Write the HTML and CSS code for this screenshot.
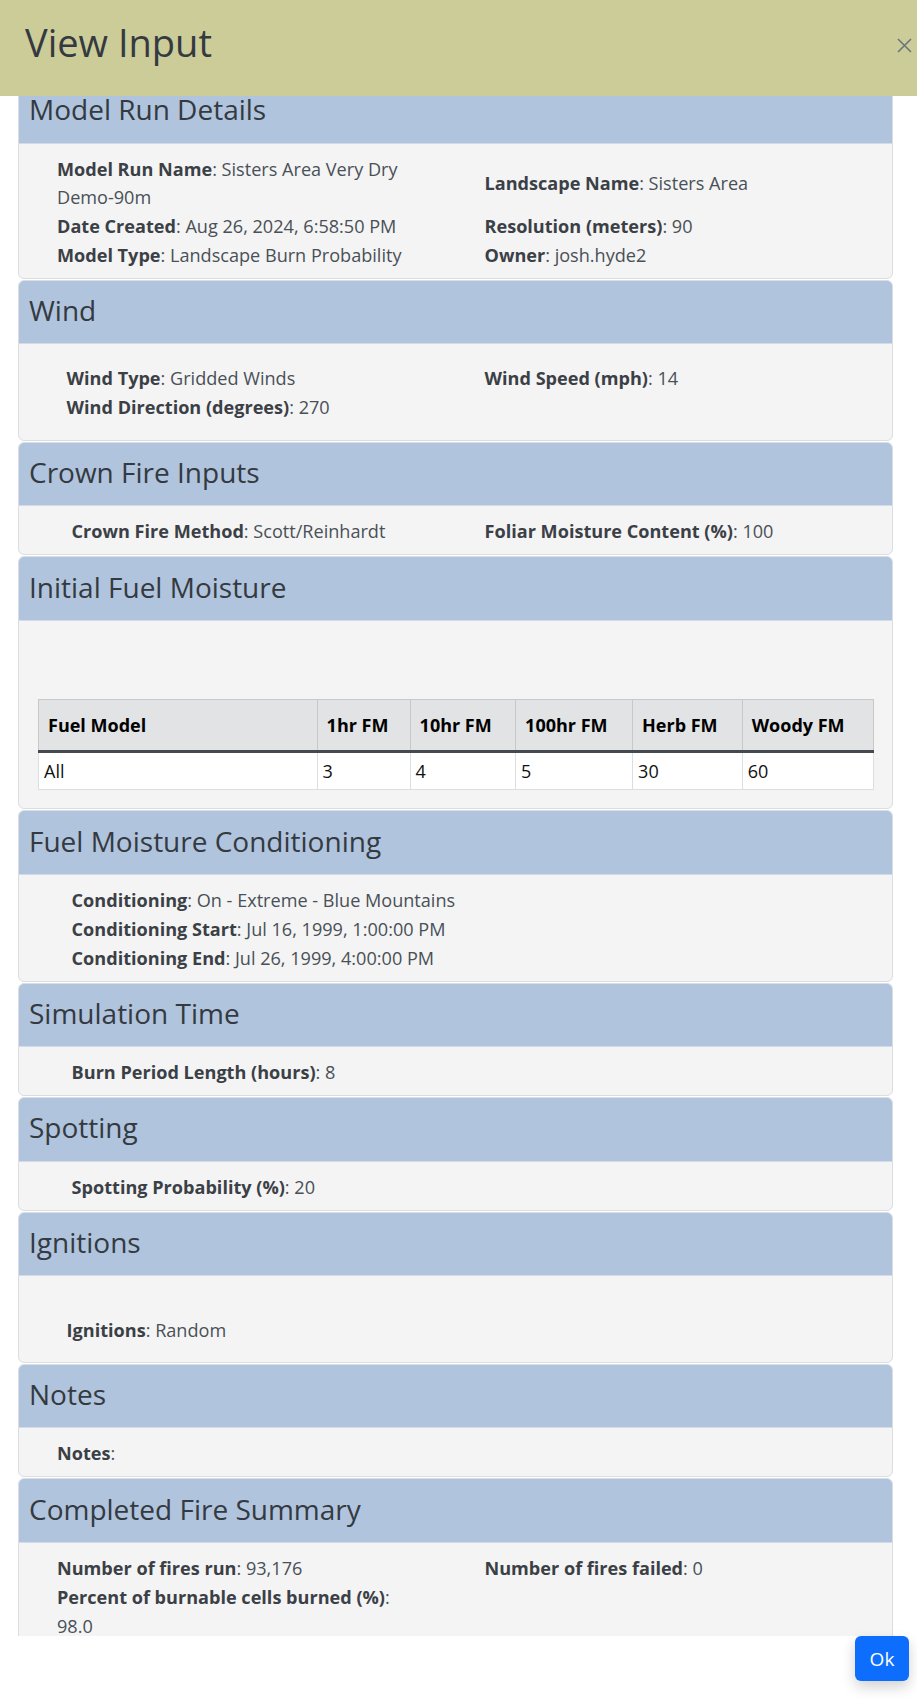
FILE: index.html
```html
<!DOCTYPE html>
<html lang="en">
<head>
<meta charset="utf-8">
<title>View Input</title>
<link rel="stylesheet" href="styles.css">
</head>
<body>
<div class="modal">
  <div class="modal-header">
    <h2 class="modal-title">View Input</h2>
    <button class="close" aria-label="Close">
      <svg width="15" height="15" viewBox="0 0 15 15"><path d="M1 1 L14 14 M14 1 L1 14" stroke="#6c757d" stroke-width="1.6" fill="none"/></svg>
    </button>
  </div>
  <div class="modal-body">
    <div class="cards">
      <section class="card">
        <div class="card-header"><h3>Model Run Details</h3></div>
        <div class="card-body grid pad-a">
          <div class="field"><b>Model Run Name</b>: Sisters Area Very Dry Demo-90m</div>
          <div class="field"><b>Landscape Name</b>: Sisters Area</div>
          <div class="field"><b>Date Created</b>: Aug 26, 2024, 6:58:50 PM</div>
          <div class="field"><b>Resolution (meters)</b>: 90</div>
          <div class="field"><b>Model Type</b>: Landscape Burn Probability</div>
          <div class="field"><b>Owner</b>: josh.hyde2</div>
        </div>
      </section>
      <section class="card">
        <div class="card-header"><h3>Wind</h3></div>
        <div class="card-body grid pad-b wind-body">
          <div class="field"><b>Wind Type</b>: Gridded Winds</div>
          <div class="field"><b>Wind Speed (mph)</b>: 14</div>
          <div class="field"><b>Wind Direction (degrees)</b>: 270</div>
          <div class="field"></div>
        </div>
      </section>
      <section class="card">
        <div class="card-header"><h3>Crown Fire Inputs</h3></div>
        <div class="card-body grid pad-c">
          <div class="field"><b>Crown Fire Method</b>: Scott/Reinhardt</div>
          <div class="field"><b>Foliar Moisture Content (%)</b>: 100</div>
        </div>
      </section>
      <section class="card">
        <div class="card-header"><h3>Initial Fuel Moisture</h3></div>
        <div class="card-body fm-body">
          <table class="fm-table">
            <thead>
              <tr>
                <th class="c-model">Fuel Model</th>
                <th class="c-1hr">1hr FM</th>
                <th class="c-10hr">10hr FM</th>
                <th class="c-100hr">100hr FM</th>
                <th class="c-herb">Herb FM</th>
                <th class="c-woody">Woody FM</th>
              </tr>
            </thead>
            <tbody>
              <tr><td>All</td><td>3</td><td>4</td><td>5</td><td>30</td><td>60</td></tr>
            </tbody>
          </table>
        </div>
      </section>
      <section class="card">
        <div class="card-header"><h3>Fuel Moisture Conditioning</h3></div>
        <div class="card-body single pad-c">
          <div class="field"><b>Conditioning</b>: On - Extreme - Blue Mountains</div>
          <div class="field"><b>Conditioning Start</b>: Jul 16, 1999, 1:00:00 PM</div>
          <div class="field"><b>Conditioning End</b>: Jul 26, 1999, 4:00:00 PM</div>
        </div>
      </section>
      <section class="card">
        <div class="card-header"><h3>Simulation Time</h3></div>
        <div class="card-body single pad-c">
          <div class="field"><b>Burn Period Length (hours)</b>: 8</div>
        </div>
      </section>
      <section class="card">
        <div class="card-header"><h3>Spotting</h3></div>
        <div class="card-body single pad-c">
          <div class="field"><b>Spotting Probability (%)</b>: 20</div>
        </div>
      </section>
      <section class="card">
        <div class="card-header"><h3>Ignitions</h3></div>
        <div class="card-body single pad-b ign-body">
          <div class="field"><b>Ignitions</b>: Random</div>
        </div>
      </section>
      <section class="card">
        <div class="card-header"><h3>Notes</h3></div>
        <div class="card-body single pad-a">
          <div class="field"><b>Notes</b>:</div>
        </div>
      </section>
      <section class="card">
        <div class="card-header"><h3>Completed Fire Summary</h3></div>
        <div class="card-body grid pad-a">
          <div class="field"><b>Number of fires run</b>: 93,176</div>
          <div class="field"><b>Number of fires failed</b>: 0</div>
          <div class="field"><b>Percent of burnable cells burned (%)</b>: 98.0</div>
          <div class="field"></div>
        </div>
      </section>
    </div>
  </div>
  <div class="modal-footer">
    <button class="btn-ok">Ok</button>
  </div>
</div>
</body>
</html>
```

FILE: styles.css
```css
* { box-sizing: border-box; }
html, body {
  margin: 0;
  padding: 0;
  background: #ffffff;
}
body {
  font-family: "Open Sans", "Noto Sans", "Liberation Sans", sans-serif;
  color: #495057;
  width: 917px;
  height: 1702px;
  overflow: hidden;
}
.modal {
  display: flex;
  flex-direction: column;
  height: 1702px;
}
.modal-header {
  flex: 0 0 96px;
  background: #cccc99;
  display: flex;
  justify-content: space-between;
  align-items: flex-start;
  padding: 19px 5px 0 25px;
  position: relative;
  z-index: 2;
}
.modal-title {
  margin: 0;
  font-size: 38px;
  line-height: 46px;
  font-weight: 500;
  color: #343a40;
}
.close {
  border: 0;
  background: transparent;
  padding: 0;
  margin-top: 19px;
  width: 15px;
  height: 15px;
  display: flex;
}
.modal-body {
  flex: 0 0 1540px;
  overflow: hidden;
  padding: 0 24px 0 18px;
}
.cards {
  margin-top: -17px;
}
.card {
  background: #f4f4f4;
  border: 1px solid #dadde1;
  border-radius: 6px;
  margin-bottom: 1px;
  overflow: hidden;
}
.card-header {
  background: #b0c4de;
  border-bottom: 1px solid #d3dbe6;
  height: 63.5px;
  padding: 11.4px 10px 0 10px;
}
.card-header h3 {
  margin: 0;
  font-size: 28px;
  line-height: 37px;
  font-weight: 500;
  color: #343a40;
}
.card-body {
  font-size: 18.1px;
  line-height: 28.8px;
  padding-top: 11px;
  padding-bottom: 8.2px;
}
.field b {
  font-weight: 700;
  color: #3b4046;
}
.grid {
  display: grid;
  align-items: center;
}
.pad-a { padding-left: 38px; }
.pad-a.grid { grid-template-columns: 358px 1fr; column-gap: 69.5px; }
.pad-b { padding-left: 47.6px; }
.pad-b.grid { grid-template-columns: 360px 1fr; column-gap: 58px; }
.pad-c { padding-left: 52.6px; }
.pad-c.grid { grid-template-columns: 360px 1fr; column-gap: 53px; }
.wind-body {
  padding-top: 20px;
  padding-bottom: 18px;
}
.ign-body {
  padding-top: 39.6px;
  padding-bottom: 17.6px;
}
.fm-body {
  padding: 78px 18.5px 18.5px 19px;
}
.fm-table {
  width: 835px;
  border-collapse: collapse;
  table-layout: fixed;
  font-size: 18px;
  color: #111111;
}
.fm-table th {
  background: #e2e3e5;
  border: 1px solid #c6c8ca;
  border-bottom: 3px solid #454a50;
  height: 52px;
  padding: 0 9px;
  text-align: left;
  font-weight: 700;
  color: #000000;
}
.fm-table td {
  background: #ffffff;
  border: 1px solid #dcdfe2;
  height: 38px;
  padding: 0 5px;
}
.c-model { width: 278.6px; }
.c-1hr { width: 93px; }
.c-10hr { width: 105.5px; }
.c-100hr { width: 117px; }
.c-herb { width: 109.6px; }
.c-woody { width: 131.3px; }
.modal-footer {
  flex: 1 1 auto;
  display: flex;
  justify-content: flex-end;
  align-items: flex-start;
  padding: 0 8px 0 0;
  background: #ffffff;
}
.btn-ok {
  width: 54px;
  height: 45px;
  background: #0d6efd;
  color: #ffffff;
  border: 0;
  border-radius: 6px;
  font-family: "Open Sans", "Noto Sans", sans-serif;
  font-size: 19px;
  box-shadow: 0 6px 14px rgba(0, 0, 0, 0.18);
}
```
